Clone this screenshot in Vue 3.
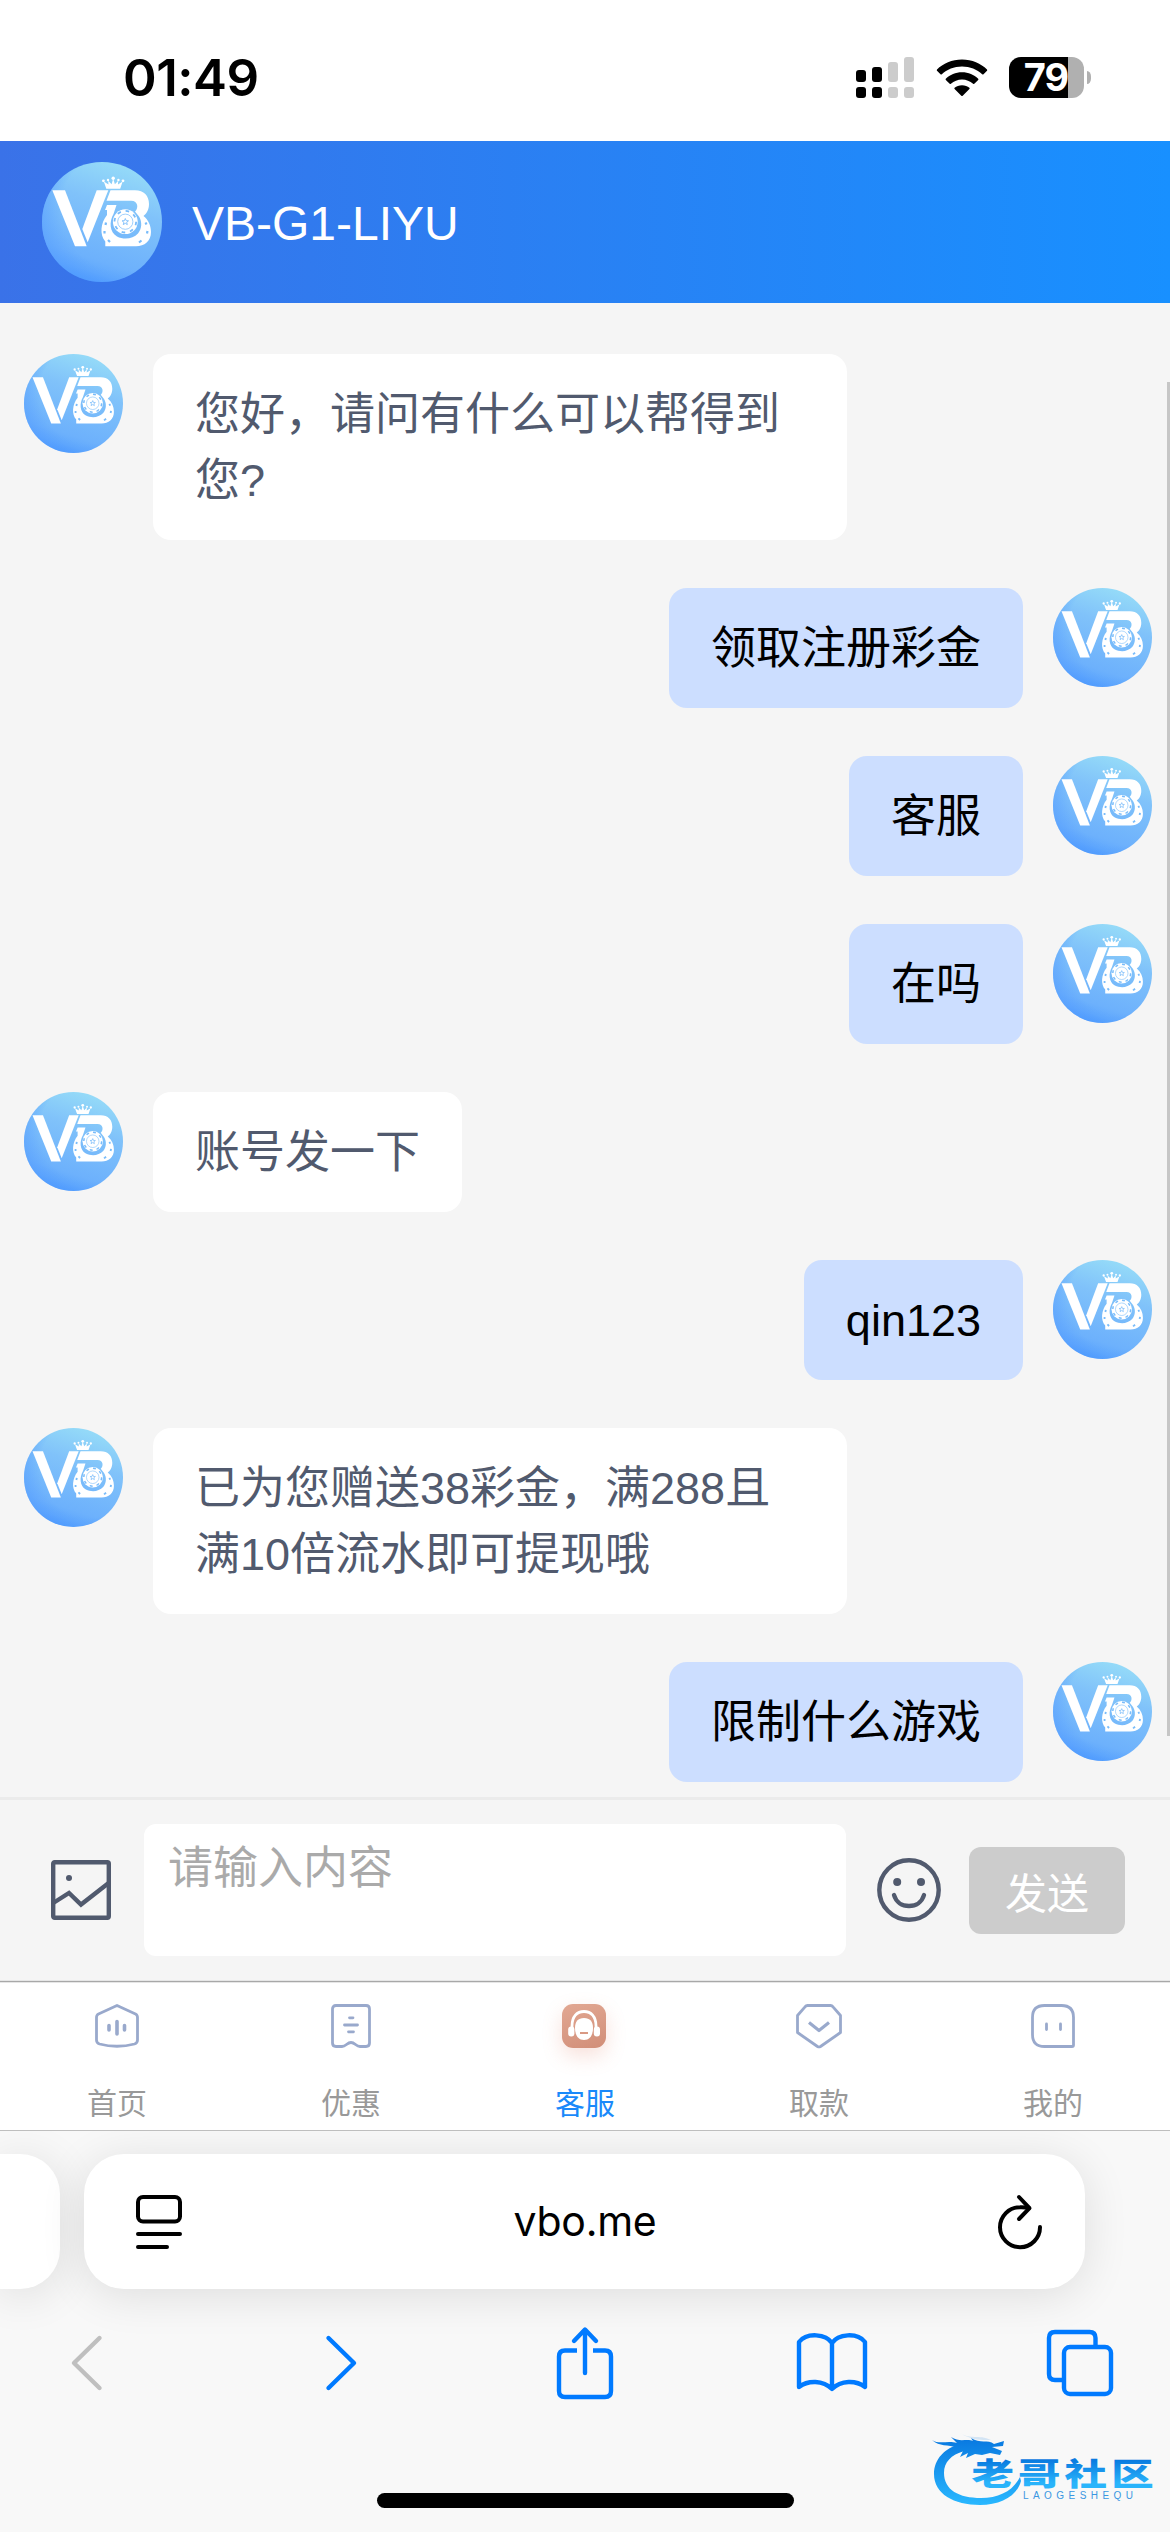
<template>
  <div class="screen">
    <!-- shared avatar artwork -->
    <svg class="defs" width="0" height="0" aria-hidden="true">
      <defs>
        <linearGradient id="avatarBg" x1="0.66" y1="0" x2="0.34" y2="1">
          <stop offset="0" stop-color="#96dcf8" />
          <stop offset="0.35" stop-color="#80c2fa" />
          <stop offset="0.8" stop-color="#6db1fc" />
          <stop offset="0.9" stop-color="#60a8fd" />
          <stop offset="1" stop-color="#4797fe" />
        </linearGradient>
        <radialGradient id="avatarEdge" cx="0.66" cy="0.4" r="0.7">
          <stop offset="0.72" stop-color="#559dff" stop-opacity="0" />
          <stop offset="1" stop-color="#559dff" stop-opacity="0.6" />
        </radialGradient>
        <symbol id="avatar" viewBox="0 0 120 120">
          <circle cx="60" cy="60" r="60" fill="url(#avatarBg)" />
          <circle cx="60" cy="60" r="60" fill="url(#avatarEdge)" />
          <g fill="#fff">
            <path d="M10.3 28.3H23L44.7 84.3H33Z" />
            <path d="M54.7 28.3H66.3L45.7 80.3L40.3 67Z" />
            <path d="M64.3 26.7L61.8 19.6L66.5 22.5L66.2 18.8L69.6 22.2L71.2 16.5L72.9 22.2L76.2 18.8L76 22.5L80.6 19.6L78.2 26.7Z" />
            <circle cx="61.4" cy="18.8" r="1.4" />
            <circle cx="66" cy="18" r="1.2" />
            <circle cx="71.2" cy="16.2" r="1.7" />
            <circle cx="76.4" cy="18" r="1.2" />
            <circle cx="81" cy="18.8" r="1.4" />
            <path d="M68.5 28.3H93C102 28.3 107 34 107 42C107 48 104.5 51.5 101.5 54C106.500 58 109 64 109 70C109 79 102.5 84.3 94 84.3H63.3V79.5C57.5 73 58.5 61 65 53V48H63L65 43H74.5L71.5 52C67 60 67.5 70 75 74.5C82 78 91 77 96 71.5C100 66.5 100.3 60 97 54.5L93 49.5C96.5 46.5 96.5 38.7 89 38.7H64.5Z" />
            <circle cx="83.3" cy="59.7" r="12.4" />
          </g>
          <g fill="none" stroke="#79bcfa">
            <circle cx="83.3" cy="59.7" r="10.8" stroke-width="1.8" stroke-dasharray="3.6 4.88" />
            <circle cx="83.3" cy="59.7" r="7.6" stroke-width="0.7" />
            <path d="M83.3 56.5L84.2 58.7L86.5 58.8L84.7 60.3L85.3 62.6L83.3 61.3L81.3 62.6L81.9 60.3L80.1 58.8L82.4 58.7Z" stroke-width="0.9" />
            <path d="M63.5 63L64 60.5M62.5 71.5V69M68 80L66 78M104.5 62.5L103.500 60.5M105 71.5L105.5 69M97 80.5L99.5 78.5" stroke-width="2.2" />
          </g>
        </symbol>
      </defs>
    </svg>

    <div class="status-bar">
      <span class="time">01:49</span>
      <svg class="signal" width="58" height="41" viewBox="0 0 58 41">
        <g>
          <rect x="0" y="13" width="10" height="12" rx="3" />
          <rect x="0" y="30" width="10" height="11" rx="3" />
          <rect x="16" y="10" width="10" height="15" rx="3" />
          <rect x="16" y="30" width="10" height="11" rx="3" />
        </g>
        <g fill="#ccc">
          <rect x="32" y="5" width="10" height="20" rx="3" />
          <rect x="32" y="30" width="10" height="11" rx="3" />
          <rect x="48" y="0" width="10" height="25" rx="3" />
          <rect x="48" y="30" width="10" height="11" rx="3" />
        </g>
      </svg>
      <svg class="wifi" width="52" height="38" viewBox="0 0 52 38">
        <path d="M26 0.500C36 0.500 45 4.500 51 10.500Q51.500 11.200 51 11.800L47.500 15.300Q46.800 15.800 46.200 15.300C41 10.300 34 7.500 26 7.500C18 7.500 11 10.300 5.800 15.300Q5.200 15.800 4.500 15.300L1 11.800Q0.500 11.200 1 10.500C7 4.500 16 0.500 26 0.500Z" />
        <path d="M26 13.200C32.500 13.200 38 15.700 42.200 19.700Q42.700 20.300 42.200 20.900L38.300 24.700Q37.700 25.200 37.100 24.700C34 22 30.300 20.400 26 20.400C21.700 20.400 18 22 14.900 24.700Q14.300 25.200 13.700 24.700L9.800 20.900Q9.300 20.300 9.800 19.700C14 15.700 19.500 13.200 26 13.200Z" />
        <path d="M26 26.200C29 26.200 31.500 27.200 33.400 28.800Q34 29.500 33.400 30.100L26.700 36.800Q26 37.400 25.300 36.800L18.600 30.100Q18 29.500 18.600 28.800C20.500 27.200 23 26.200 26 26.200Z" />
      </svg>
      <div class="battery"><span>79</span></div>
      <i class="battery-cap"></i>
    </div>

    <header class="header">
      <svg class="header-avatar"><use href="#avatar" /></svg>
      <span class="header-title">VB-G1-LIYU</span>
    </header>

    <main class="chat">
      <div v-for="(msg, i) in messages" :key="i" class="row" :class="{ own: msg.own }">
        <svg class="avatar"><use href="#avatar" /></svg>
        <div class="bubble">{{ msg.text }}</div>
      </div>
      <div class="scrollbar"></div>
    </main>

    <div class="input-bar">
      <svg class="icon-image" width="60" height="60" viewBox="0 0 60 60">
        <rect x="2.2" y="2.2" width="55.6" height="55.6" rx="1.5" />
        <path d="M3 42.500L18 33L30 44.500L57 23.500" />
        <circle cx="18" cy="18" r="3" class="dot" />
      </svg>
      <div class="textarea">请输入内容</div>
      <svg class="icon-smile" width="64" height="64" viewBox="0 0 64 64">
        <circle cx="32" cy="32" r="29.7" />
        <path d="M17 37C19 44 25 48 32 48C39 48 45 44 47 37" />
        <circle cx="20.2" cy="24" r="4" class="dot" />
        <circle cx="44" cy="24" r="4" class="dot" />
      </svg>
      <button type="button" class="send">发送</button>
    </div>

    <nav class="tabbar">
      <div v-for="tab in tabs" :key="tab.name" class="tab" :class="{ active: tab.active }">
        <svg v-if="tab.name === 'home'" width="46" height="46" viewBox="0 0 46 46">
          <path d="M23 2.500L41.500 11Q43.500 12 43.500 14.500V37Q43.500 40 40.500 41Q23 45.500 5.500 41Q2.500 40 2.500 37V14.500Q2.500 12 4.500 11Z" />
          <path d="M23 18.500V31M15 22.500V27M30.500 22.500V27" stroke-width="3.6" />
        </svg>
        <svg v-else-if="tab.name === 'promo'" width="46" height="46" viewBox="0 0 46 46">
          <path d="M8 2.500H38Q41.500 2.500 41.500 6V40Q41.500 43.500 38 43.500H32C28 43.500 27 39.500 23 39.500C19 39.500 18 43.500 14 43.500H8Q4.500 43.500 4.500 40V6Q4.500 2.500 8 2.500Z" />
          <path d="M21.500 14.800H25M16.500 22H29.500M20.500 28.800H25.500" />
        </svg>
        <svg v-else-if="tab.name === 'service'" class="service" width="44" height="44" viewBox="0 0 44 44">
          <path d="M10 25V22C10 12.500 15 7.500 22 7.500C29 7.500 34 12.500 34 22V25" fill="none" stroke="#fff" stroke-width="2.8" />
          <rect x="6.2" y="22.5" width="6.2" height="10" rx="3" fill="#fff" />
          <rect x="31.8" y="22.5" width="6.2" height="10" rx="3" fill="#fff" />
          <path d="M22 14C28 14 31 17.500 31 24C31 31 28 36 22 36C16 36 13 31 13 24C13 17.500 16 14 22 14Z" fill="#fff" />
          <rect x="18" y="28" width="8" height="2" fill="#d99a84" />
        </svg>
        <svg v-else-if="tab.name === 'withdraw'" width="46" height="46" viewBox="0 0 46 46">
          <path d="M11.500 2.500H34.500Q36 2.500 37 3.800L44.500 12.500V29.500L24.500 43.500Q23 44.300 21.500 43.500L1.500 29.500V12.500L9 3.800Q10 2.500 11.500 2.500Z" />
          <path d="M13 19.500L23 27.500L33 19.500" stroke-width="3.2" stroke-linecap="butt" />
        </svg>
        <svg v-else width="46" height="46" viewBox="0 0 46 46">
          <path d="M14.500 2.500H31.500Q43.500 2.500 43.500 14.500V42Q43.500 43.500 42 43.500H14.500Q2.500 43.500 2.500 31.500V14.500Q2.500 2.500 14.500 2.500Z" />
          <path d="M16.500 21V26.500M30.500 21V26.500" />
        </svg>
        <span>{{ tab.label }}</span>
      </div>
    </nav>

    <footer class="browser">
      <div class="address-row">
        <div class="page-card"></div>
        <div class="address">
          <svg width="46" height="54" viewBox="0 0 46 54">
            <rect x="2" y="2" width="42" height="24.5" rx="5" />
            <path d="M2 39H44M2 52H31" />
          </svg>
          <span>vbo.me</span>
          <svg width="46" height="56" viewBox="0 0 46 56">
            <path d="M43 33A20 20 0 1 1 23 13.200Q28 13 32 14.200" />
            <path d="M22 3L32.500 14.200L22 25" />
          </svg>
        </div>
      </div>
      <div class="toolbar">
        <svg class="back" width="34" height="60" viewBox="0 0 34 60"><path d="M29.500 5L4 30L29.500 55" /></svg>
        <svg class="forward" width="34" height="60" viewBox="0 0 34 60"><path d="M4.500 5L30 30L4.500 55" /></svg>
        <svg class="share" width="60" height="76" viewBox="0 0 60 76">
          <path d="M22 25.500H10Q4 25.500 4 31.500V66Q4 72 10 72H50Q56 72 56 66V31.500Q56 25.500 50 25.500H38" stroke-linecap="butt" />
          <path d="M30 48V5M19 16L30 4.500L41 16" />
        </svg>
        <svg class="bookmarks" width="72" height="62" viewBox="0 0 72 62">
          <path d="M36 11C30 2 11 0 3 10V55C12 48 27 48 36 57C45 48 60 48 69 55V10C61 0 42 2 36 11ZM36 11V56" />
        </svg>
        <svg class="pages" width="68" height="68" viewBox="0 0 68 68">
          <path d="M17 51H9Q3 51 3 45V9Q3 3 9 3H43.500Q49.500 3 49.500 9V17" stroke-linecap="butt" />
          <rect x="18" y="18" width="47" height="47" rx="6" />
        </svg>
      </div>
      <div class="home-indicator"></div>
    </footer>

    <svg class="watermark" width="270" height="132" viewBox="0 0 270 132">
      <defs>
        <linearGradient id="wmText" x1="0" y1="0" x2="0" y2="1">
          <stop offset="0.25" stop-color="#0a7be0" />
          <stop offset="0.75" stop-color="#29b4fb" />
        </linearGradient>
        <linearGradient id="wmRing" gradientUnits="userSpaceOnUse" x1="0" y1="38" x2="0" y2="105">
          <stop offset="0" stop-color="#0878e0" />
          <stop offset="1" stop-color="#2ab8ff" />
        </linearGradient>
      </defs>
      <g fill="url(#wmRing)">
        <path d="M60 44C45 48 34 59 34 74C34 94 54 105 80 105C101 105 117 96 121 81L120 77C113 91 99 98 81 98C59 98 44 90 44 73C44 62 51 55 64 51Z" />
        <path d="M32 40C40 45 47 40 57 43L51 37C60 43 67 38 73 41L71 38C80 44 88 39 94 44L104 41L103 46L92 47L102 51L100 55L90 53L82 55L75 54L66 58L68 53L60 57L63 51L53 54L58 48C47 44 40 47 32 40Z" />
        <path d="M60 33C71 40 78 34 91 40C83 40 73 41 60 33Z" opacity="0.15" />
      </g>
      <text class="wm-name" transform="translate(71.5 85) scale(1.37 1)" fill="url(#wmText)">老哥社区</text>
      <text class="wm-sub" x="123" y="99" textLength="110" fill="#3a97e2">LAOGESHEQU</text>
    </svg>
  </div>
</template>

<script setup>
const messages = [
  { text: '您好，请问有什么可以帮得到您?' },
  { text: '领取注册彩金', own: true },
  { text: '客服', own: true },
  { text: '在吗', own: true },
  { text: '账号发一下' },
  { text: 'qin123', own: true },
  { text: '已为您赠送38彩金，满288且满10倍流水即可提现哦' },
  { text: '限制什么游戏', own: true }
]

const tabs = [
  { name: 'home', label: '首页' },
  { name: 'promo', label: '优惠' },
  { name: 'service', label: '客服', active: true },
  { name: 'withdraw', label: '取款' },
  { name: 'mine', label: '我的' }
]
</script>

<style>
body {
  margin: 0;
}
</style>

<style scoped>
.screen {
  position: relative;
  width: 1170px;
  height: 2532px;
  display: flex;
  flex-direction: column;
  overflow: hidden;
  background: #f5f5f5;
  font-family: "Liberation Sans", "Noto Sans CJK SC", sans-serif;
}

.screen > * {
  flex-shrink: 0;
}

.screen svg {
  display: block;
  flex-shrink: 0;
}

.defs {
  position: absolute;
}

.status-bar {
  box-sizing: border-box;
  height: 141px;
  padding: 14px 79px 0 123px;
  display: flex;
  align-items: center;
  background: #fff;
}

.time {
  flex: 1;
  font: 600 51px/60px Inter, sans-serif;
  letter-spacing: -0.5px;
}

.wifi {
  margin: 0 21px 0 22px;
}

.battery {
  width: 75px;
  height: 41px;
  border-radius: 12px;
  background: linear-gradient(90deg, #000 59px, #b0b0b0 59px);
  color: #fff;
  font: 700 38px/41px Inter, sans-serif;
  text-align: center;
  letter-spacing: -1px;
}

.battery span {
  display: block;
  width: 74px;
}

.battery-cap {
  width: 4px;
  height: 13px;
  margin-left: 3px;
  border-radius: 0 5px 5px 0 / 0 6.5px 6.5px 0;
  background: #b0b0b0;
}

.header {
  height: 162px;
  padding-left: 42px;
  display: flex;
  align-items: center;
  gap: 30px;
  background: linear-gradient(90deg, #3a72e8, #1890ff);
  color: #fff;
}

.header-avatar {
  width: 120px;
  height: 120px;
}

.header-title {
  padding-top: 2px;
  font-size: 48px;
}

.chat {
  position: relative;
  box-sizing: border-box;
  height: 1494px;
  padding: 51px 18px 0 24px;
  display: flex;
  flex-direction: column;
  gap: 48px;
  overflow: hidden;
}

.row {
  display: flex;
  align-items: flex-start;
  gap: 30px;
}

.row.own {
  flex-direction: row-reverse;
}

.avatar {
  width: 99px;
  height: 99px;
}

.bubble {
  box-sizing: border-box;
  max-width: 694px;
  padding: 28px 42px 26px;
  border-radius: 18px;
  background: #fff;
  color: #515a6e;
  font-size: 45px;
  line-height: 66px;
}

.own .bubble {
  background: #ccdeff;
  color: #000;
}

.scrollbar {
  position: absolute;
  top: 79px;
  right: 0;
  width: 3px;
  height: 1354px;
  background: #c6c6c6;
}

.input-bar {
  box-sizing: border-box;
  height: 184px;
  padding: 0 45px 1px 51px;
  display: flex;
  align-items: center;
  border-top: 3px solid #ebebeb;
}

.icon-image,
.icon-smile {
  fill: none;
  stroke: #515a6e;
  stroke-width: 4.4;
  stroke-linecap: round;
}

.dot {
  fill: #515a6e;
  stroke: none;
}

.textarea {
  box-sizing: border-box;
  width: 702px;
  height: 132px;
  margin: 0 31px 0 33px;
  padding: 12px 24px;
  border-radius: 12px;
  background: #fff;
  color: #aaa;
  font-size: 45px;
  line-height: 66px;
}

.send {
  width: 156px;
  height: 87px;
  margin-left: 28px;
  padding: 0;
  border: 0;
  border-radius: 12px;
  background: #ccc;
  color: #fff;
  font-family: inherit;
  font-size: 42px;
}

.tabbar {
  box-sizing: border-box;
  height: 150px;
  display: flex;
  border-top: 1px solid #a8a8a8;
  border-bottom: 1px solid #bebebe;
  background: #fff;
  box-shadow: 0 -1px 0 #e6e6e6, inset 0 1px 0 #e6e6e6;
}

.tab {
  flex: 1;
  display: flex;
  flex-direction: column;
  align-items: center;
  padding-top: 21px;
  color: #999;
  font-size: 30px;
  line-height: 40px;
}

.tab svg {
  margin-bottom: 35px;
  fill: none;
  stroke: #99a9cc;
  stroke-width: 2.8;
  stroke-linecap: round;
  stroke-linejoin: round;
}

.tab .service {
  margin: 1px 2px 36px 0;
  border-radius: 11px;
  background: linear-gradient(160deg, #e2a893, #d18e78);
  box-shadow: 0 8px 20px rgba(224, 120, 90, 0.22);
  stroke: none;
}

.tab.active {
  color: #1989fa;
}

.browser {
  flex: 1;
  display: flex;
  flex-direction: column;
  align-items: center;
  overflow: hidden;
  background: #f8f8f8;
}

.address-row {
  width: 1170px;
  display: flex;
  gap: 24px;
  margin-top: 23px;
}

.page-card,
.address {
  height: 135px;
  border-radius: 40px;
  background: #fff;
  box-shadow: 0 6px 46px rgba(0, 0, 0, 0.11);
}

.page-card {
  width: 60px;
  border-radius: 0 40px 40px 0;
}

.address {
  box-sizing: border-box;
  width: 1001px;
  padding: 0 42px 0 52px;
  display: flex;
  align-items: center;
  justify-content: space-between;
  font: 400 41px/50px Inter, sans-serif;
  letter-spacing: -0.3px;
}

.address span {
  margin: 0 9px 2px 0;
}

.address svg {
  fill: none;
  stroke: #000;
  stroke-width: 4;
  stroke-linecap: round;
  stroke-linejoin: round;
}

.toolbar {
  box-sizing: border-box;
  width: 1170px;
  height: 76px;
  margin-top: 36px;
  padding-left: 70px;
  display: flex;
  align-items: center;
}

.toolbar svg {
  fill: none;
  stroke: #007aff;
  stroke-width: 4.4;
  stroke-linecap: round;
  stroke-linejoin: round;
}

.toolbar .back {
  stroke: #bfbfbf;
}

.toolbar .forward {
  margin-left: 220px;
}

.toolbar .share {
  margin-left: 197px;
}

.toolbar .bookmarks {
  margin-left: 181px;
}

.toolbar .pages {
  margin-left: 178px;
}

.home-indicator {
  width: 417px;
  height: 15px;
  margin-top: 92px;
  border-radius: 8px;
  background: #000;
}

.watermark {
  position: absolute;
  right: 0;
  bottom: 0;
}

.wm-name {
  font: 900 31px "Noto Sans CJK SC", sans-serif;
  letter-spacing: 3px;
}

.wm-sub {
  font: 400 10px "Liberation Sans", sans-serif;
}
</style>
